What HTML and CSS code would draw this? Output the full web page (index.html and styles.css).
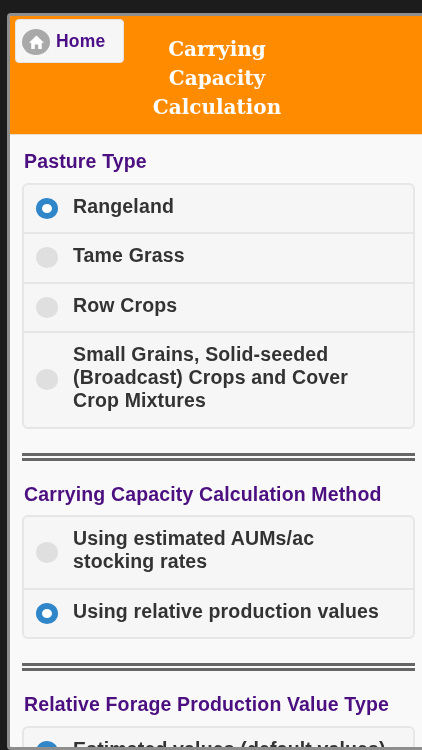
FILE: index.html
```html
<!DOCTYPE html>
<html lang="en">
<head>
    <meta charset="utf-8">
    <meta name="viewport" content="width=device-width, initial-scale=1.0">
    <title>Carrying Capacity Calculation</title>
    <link rel="stylesheet" href="styles.css">
</head>
<body>
    <div class="screen">
        <div class="header">
            <a class="home-btn" href="#">
                <span class="home-icon">
                    <svg viewBox="0 0 18 18" width="17" height="17">
                        <path d="M9 1.5 L17 9.2 L14.6 9.2 L14.6 16 L10.8 16 L10.8 11.2 L7.2 11.2 L7.2 16 L3.4 16 L3.4 9.2 L1 9.2 Z" fill="#fff"/>
                    </svg>
                </span>
                Home
            </a>
            <h1>Carrying Capacity Calculation</h1>
        </div>

        <div class="content">
            <h3>Pasture Type</h3>
            <div class="radio-list">
                <div class="radio-row">
                    <span class="radio checked"></span>
                    <span class="radio-label">Rangeland</span>
                </div>
                <div class="radio-row">
                    <span class="radio"></span>
                    <span class="radio-label">Tame Grass</span>
                </div>
                <div class="radio-row">
                    <span class="radio"></span>
                    <span class="radio-label">Row Crops</span>
                </div>
                <div class="radio-row">
                    <span class="radio"></span>
                    <span class="radio-label">Small Grains, Solid-seeded (Broadcast) Crops and Cover Crop Mixtures</span>
                </div>
            </div>

            <hr class="divider">

            <h3>Carrying Capacity Calculation Method</h3>
            <div class="radio-list">
                <div class="radio-row">
                    <span class="radio"></span>
                    <span class="radio-label">Using estimated AUMs/ac stocking rates</span>
                </div>
                <div class="radio-row">
                    <span class="radio checked"></span>
                    <span class="radio-label">Using relative production values</span>
                </div>
            </div>

            <hr class="divider">

            <h3>Relative Forage Production Value Type</h3>
            <div class="radio-list">
                <div class="radio-row">
                    <span class="radio checked"></span>
                    <span class="radio-label">Estimated values (default values)</span>
                </div>
            </div>
        </div>
    </div>
</body>
</html>
```

FILE: styles.css
```css
html, body {
    height: 100%;
}
body {
    margin: 0;
    padding: 13px 0 0 7px;
    box-sizing: border-box;
    background: #1c1c1c;
    font-family: "Liberation Sans", Arial, sans-serif;
    overflow: hidden;
}
.screen {
    height: 100%;
    box-sizing: border-box;
    border: 3px solid #8e8e8e;
    border-right: none;
    border-radius: 4px 0 0 4px;
    background: #f9f9f9;
    overflow: hidden;
    filter: blur(0.4px);
}
.header {
    position: relative;
    height: 119px;
    box-sizing: border-box;
    padding: 19px 0 0 2px;
    background: #ff8c00;
    border-bottom: 1px solid #e8dccb;
    text-align: center;
}
.header h1 {
    width: 150px;
    margin: 0 auto;
    font-family: "DejaVu Serif", serif;
    font-size: 20px;
    line-height: 29px;
    font-weight: bold;
    color: #fff;
}
.home-btn {
    position: absolute;
    top: 3px;
    left: 5px;
    width: 109px;
    height: 44px;
    box-sizing: border-box;
    padding-left: 6px;
    display: flex;
    align-items: center;
    gap: 6px;
    background: #f6f6f6;
    border: 1px solid #e4e4e4;
    border-radius: 4px;
    font-size: 17.5px;
    font-weight: bold;
    letter-spacing: 0.2px;
    color: #4b0f87;
    text-decoration: none;
}
.home-icon {
    width: 28px;
    height: 26px;
    margin-top: 2px;
    border-radius: 50%;
    background: #a9a9a9;
    display: flex;
    align-items: center;
    justify-content: center;
}
.content {
    padding: 15px 7px 0 12px;
}
.content h3 {
    margin: 0 0 9.5px 2px;
    font-size: 19.5px;
    line-height: 23px;
    font-weight: bold;
    letter-spacing: 0.15px;
    color: #4b0f80;
}
.radio-list {
    background: #f6f6f6;
    border: 2px solid #e6e6e6;
    border-radius: 6px;
}
.radio-row {
    display: flex;
    align-items: center;
    padding: 11px 24px 13.5px 12px;
    border-bottom: 2px solid #e6e6e6;
}
.radio-row:last-child {
    border-bottom: none;
}
.radio {
    width: 22px;
    height: 21px;
    box-sizing: border-box;
    margin-top: 2px;
    margin-right: 15px;
    flex-shrink: 0;
    border-radius: 50%;
    background: #dfdfdf;
}
.radio.checked {
    background: #fff;
    border: 6px solid #2f86c9;
}
.radio-label {
    margin: -1px 0 1px;
    font-size: 19.5px;
    line-height: 23px;
    font-weight: bold;
    letter-spacing: 0.15px;
    color: #333;
}
.divider {
    height: 0;
    margin: 24px 0 22px;
    border: none;
    border-top: 8px double #666;
}
```
